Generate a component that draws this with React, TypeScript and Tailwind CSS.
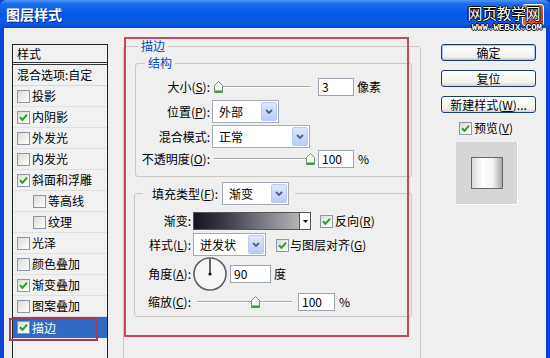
import React from "react";

const FONT = "font-['Noto_Sans_CJK_SC','Noto_Sans',sans-serif]";

function Check({ on }: { on?: boolean }) {
  return (
    <span className="inline-flex w-[13px] h-[13px] shrink-0 items-center justify-center border border-[#8b98a8] bg-[linear-gradient(135deg,#dcdcd7,#ffffff)]">
      {on && (
        <svg width="9" height="9" viewBox="0 0 9 9">
          <path d="M1 4.2 L3.5 6.8 L8 1.6" fill="none" stroke="#23a223" strokeWidth="2" />
        </svg>
      )}
    </span>
  );
}

function Thumb() {
  return (
    <svg width="9" height="12" viewBox="0 0 9 12">
      <path d="M0.5 11.5 V4.5 L4.5 0.5 L8.5 4.5 V11.5 Z" fill="#f4f8f0" stroke="#7c8c7c" />
      <path d="M1 10.5 H8" stroke="#2ea02e" strokeWidth="2" />
    </svg>
  );
}

function Slider({ className, pos }: { className: string; pos: number }) {
  return (
    <div className={`relative h-[14px] ${className}`}>
      <div className="absolute left-0 right-0 top-[6px] h-[2px] border-t border-[#a9a9a9] border-b border-b-white" />
      <div className="absolute top-[1px]" style={{ left: `calc(${pos * 100}% - 4px)` }}>
        <Thumb />
      </div>
    </div>
  );
}

function Select({ value, className }: { value: string; className: string }) {
  return (
    <div className={`flex items-center h-[23px] border border-[#a5acb5] bg-white ${className}`}>
      <span className="flex-1 pl-[6px] leading-none">{value}</span>
      <span className="mr-[1px] w-[16px] h-[19px] rounded-[2px] border border-[#b9cbf3] bg-[linear-gradient(180deg,#dde8fd,#b8ccf8)] flex items-center justify-center">
        <svg width="8" height="6" viewBox="0 0 8 6">
          <path d="M1 1 L4 4 L7 1" stroke="#4d6185" strokeWidth="1.8" fill="none" />
        </svg>
      </span>
    </div>
  );
}

function Field({ value, className }: { value: string; className: string }) {
  return (
    <div className={`h-[18px] border border-[#9aa4b0] bg-white flex items-center pl-[3px] leading-none ${className}`}>
      {value}
    </div>
  );
}

function Button({ children, main }: { children: React.ReactNode; main?: boolean }) {
  return (
    <div
      className={`h-[17px] w-[95px] rounded-[3px] border border-[#1c3f6e] bg-[linear-gradient(180deg,#ffffff,#f3f3ef_75%,#d8d4ca)] flex items-center justify-center leading-none ${
        main ? "shadow-[inset_0_0_0_1px_#a9c4f0]" : ""
      }`}
    >
      {children}
    </div>
  );
}

const items: { label: string; on?: boolean; indent?: boolean }[] = [
  { label: "投影" },
  { label: "内阴影", on: true },
  { label: "外发光" },
  { label: "内发光" },
  { label: "斜面和浮雕", on: true },
  { label: "等高线", indent: true },
  { label: "纹理", indent: true },
  { label: "光泽" },
  { label: "颜色叠加" },
  { label: "渐变叠加", on: true },
  { label: "图案叠加" },
];

export default function App() {
  return (
    <div className={`relative w-[550px] h-[358px] overflow-hidden bg-[#0a45d8] text-[12px] text-black ${FONT}`}>
      {/* title bar */}
      <div className="h-[28px] flex items-center pl-[6px] rounded-t-[6px] bg-[linear-gradient(180deg,#4d95f7_0%,#1a6cec_14%,#0858e6_50%,#0a5ae8_86%,#0445cb_100%)]">
        <span className="text-white font-bold text-[14px] leading-none [text-shadow:1px_1px_#0a2a80]">图层样式</span>
        <div className="ml-auto mr-[6px] mt-[2px] w-[22px] h-[22px] rounded-[3px] border border-white bg-[linear-gradient(135deg,#f09070,#d9552e_55%,#b8391a)] flex items-center justify-center">
          <svg width="12" height="12" viewBox="0 0 12 12">
            <path d="M2 2 L10 10 M10 2 L2 10" stroke="white" strokeWidth="2.4" />
          </svg>
        </div>
      </div>

      {/* body */}
      <div className="relative mx-[4px] h-[330px] bg-[#efefef] flex">
        {/* styles list */}
        <div className="ml-[8px] mt-[16px] w-[96px] h-[330px] border border-[#222] bg-[#f1f1f1] flex flex-col">
          <div className="h-[20px] pl-[4px] flex items-center border-b-[3px] border-double border-[#333]">样式</div>
          <div className="h-[21px] pl-[4px] flex items-center border-b border-[#d6d6d6]">混合选项:自定</div>
          {items.map((it) => (
            <div
              key={it.label}
              className={`h-[21px] flex items-center gap-[2px] border-b border-[#e0e0e0] ${it.indent ? "pl-[20px]" : "pl-[4px]"}`}
            >
              <Check on={it.on} />
              <span>{it.label}</span>
            </div>
          ))}
          <div className="h-[21px] pl-[4px] flex items-center gap-[2px] bg-[#316ac5] text-white">
            <Check on />
            <span>描边</span>
          </div>
        </div>

        {/* main panel */}
        <fieldset className="ml-[15px] mt-[10px] w-[298px] h-[340px] border border-[#c9c9c2] rounded-[3px]">
          <legend className="ml-[14px] px-[3px] leading-[16px] text-[#1045c8]">描边</legend>

          <fieldset className="ml-[11px] mt-[1px] w-[277px] border border-[#c9c9c2] rounded-[3px] pb-[8px]">
            <legend className="ml-[9px] px-[3px] leading-[16px] text-[#1045c8]">结构</legend>
            <div className="flex items-center h-[22px] mt-[5px]">
              <span className="w-[74px] text-right">
                大小(<u>S</u>):
              </span>
              <Slider className="ml-[4px] w-[97px]" pos={0.04} />
              <Field value="3" className="ml-[7px] w-[36px]" />
              <span className="ml-[3px]">像素</span>
            </div>
            <div className="flex items-center h-[23px] mt-[2px]">
              <span className="w-[74px] text-right">
                位置(<u>P</u>):
              </span>
              <Select value="外部" className="ml-[2px] w-[67px]" />
            </div>
            <div className="flex items-center h-[23px] mt-[2px]">
              <span className="w-[74px] text-right">混合模式:</span>
              <Select value="正常" className="ml-[2px] w-[98px]" />
            </div>
            <div className="flex items-center h-[18px] mt-[2px]">
              <span className="w-[74px] text-right whitespace-nowrap">
                不透明度(<u>O</u>):
              </span>
              <Slider className="ml-[4px] w-[97px]" pos={0.99} />
              <Field value="100" className="ml-[7px] w-[36px]" />
              <span className="ml-[4px]">%</span>
            </div>
          </fieldset>

          <fieldset className="ml-[10px] mt-[5px] w-[278px] border border-[#c9c9c2] rounded-[3px] pb-[5px]">
            <legend className="ml-[8px] pl-[9px] pr-[6px] flex items-center">
              <span className="whitespace-nowrap">
                填充类型(<u>F</u>):
              </span>
              <Select value="渐变" className="ml-[4px] w-[67px]" />
            </legend>
            <div className="flex items-center h-[18px] mt-[7px]">
              <span className="w-[56px] text-right">渐变:</span>
              <div className="ml-[2px] flex h-[18px] border border-[#555]">
                <div className="w-[105px] bg-[linear-gradient(90deg,#151522,#3c3c4a_30%,#8a8a92_75%,#b4b4b4)]" />
                <div className="w-[11px] bg-white border-l border-[#555] flex items-center justify-center">
                  <svg width="5" height="3" viewBox="0 0 5 3">
                    <path d="M0 0 H5 L2.5 3 Z" fill="#111" />
                  </svg>
                </div>
              </div>
              <span className="ml-[9px]">
                <Check on />
              </span>
              <span className="ml-[2px]">
                反向(<u>R</u>)
              </span>
            </div>
            <div className="flex items-center h-[23px] mt-[3px]">
              <span className="w-[56px] text-right">
                样式(<u>L</u>):
              </span>
              <Select value="迸发状" className="ml-[2px] w-[73px]" />
              <span className="ml-[10px]">
                <Check on />
              </span>
              <span className="ml-[1px]">
                与图层对齐(<u>G</u>)
              </span>
            </div>
            <div className="flex items-center h-[34px] mt-[1px]">
              <span className="w-[56px] text-right">
                角度(<u>A</u>):
              </span>
              <svg className="ml-[2px]" width="34" height="34" viewBox="0 0 34 34">
                <circle cx="17" cy="17" r="16" fill="#f7f7f7" stroke="#5d5f6e" strokeWidth="1.6" />
                <path d="M17 17 V2" stroke="#333" strokeWidth="1.5" />
                <circle cx="17" cy="17" r="1.6" fill="#111" />
              </svg>
              <Field value="90" className="ml-[3px] w-[41px]" />
              <span className="ml-[3px]">度</span>
            </div>
            <div className="flex items-center h-[18px] mt-[2px]">
              <span className="w-[56px] text-right">
                缩放(<u>C</u>):
              </span>
              <Slider className="ml-[6px] w-[95px]" pos={0.61} />
              <Field value="100" className="ml-[6px] w-[37px]" />
              <span className="ml-[4px]">%</span>
            </div>
          </fieldset>
        </fieldset>

        {/* right column */}
        <div className="ml-[20px] mt-[16px] w-[95px] flex flex-col">
          <Button main>确定</Button>
          <div className="mt-[9px]">
            <Button>复位</Button>
          </div>
          <div className="mt-[9px]">
            <Button>
              新建样式(<u>W</u>)...
            </Button>
          </div>
          <div className="mt-[8px] pl-[18px] flex items-center gap-[2px] h-[14px]">
            <Check on />
            <span>
              预览(<u>V</u>)
            </span>
          </div>
          <div className="mt-[7px] ml-[15px] w-[62px] h-[63px] bg-[#d6d6d6] border-r border-b border-white flex items-center justify-center">
            <div className="w-[32px] h-[32px] border border-[#666] bg-[linear-gradient(90deg,#d9d9d9,#ffffff_35%,#f2f2f2_70%,#a9a9a9)]" />
          </div>
        </div>

        {/* red annotation boxes */}
        <div className="pointer-events-none absolute left-[120px] top-[9px] w-[285px] h-[300px] border-2 border-[#c9465c]" />
        <div className="pointer-events-none absolute left-[5px] top-[290px] w-[89px] h-[23px] border-2 border-[#9e3c5c]" />
      </div>

      {/* watermark */}
      <div className="pointer-events-none absolute right-[10px] top-[5px] flex flex-col items-end">
        <span className="text-white text-[15px] leading-[16px] tracking-[-0.5px] [text-shadow:1px_0_#000,-1px_0_#000,0_1px_#000,0_-1px_#000]">
          网页教学网
        </span>
        <span className="-mr-[2px] mt-[3px] font-['Liberation_Mono',monospace] font-bold text-[9px] leading-[8px] text-white [text-shadow:1px_0_#000,-1px_0_#000,0_1px_#000,0_-1px_#000]">
          WWW.WEBJX.COM
        </span>
      </div>
    </div>
  );
}
